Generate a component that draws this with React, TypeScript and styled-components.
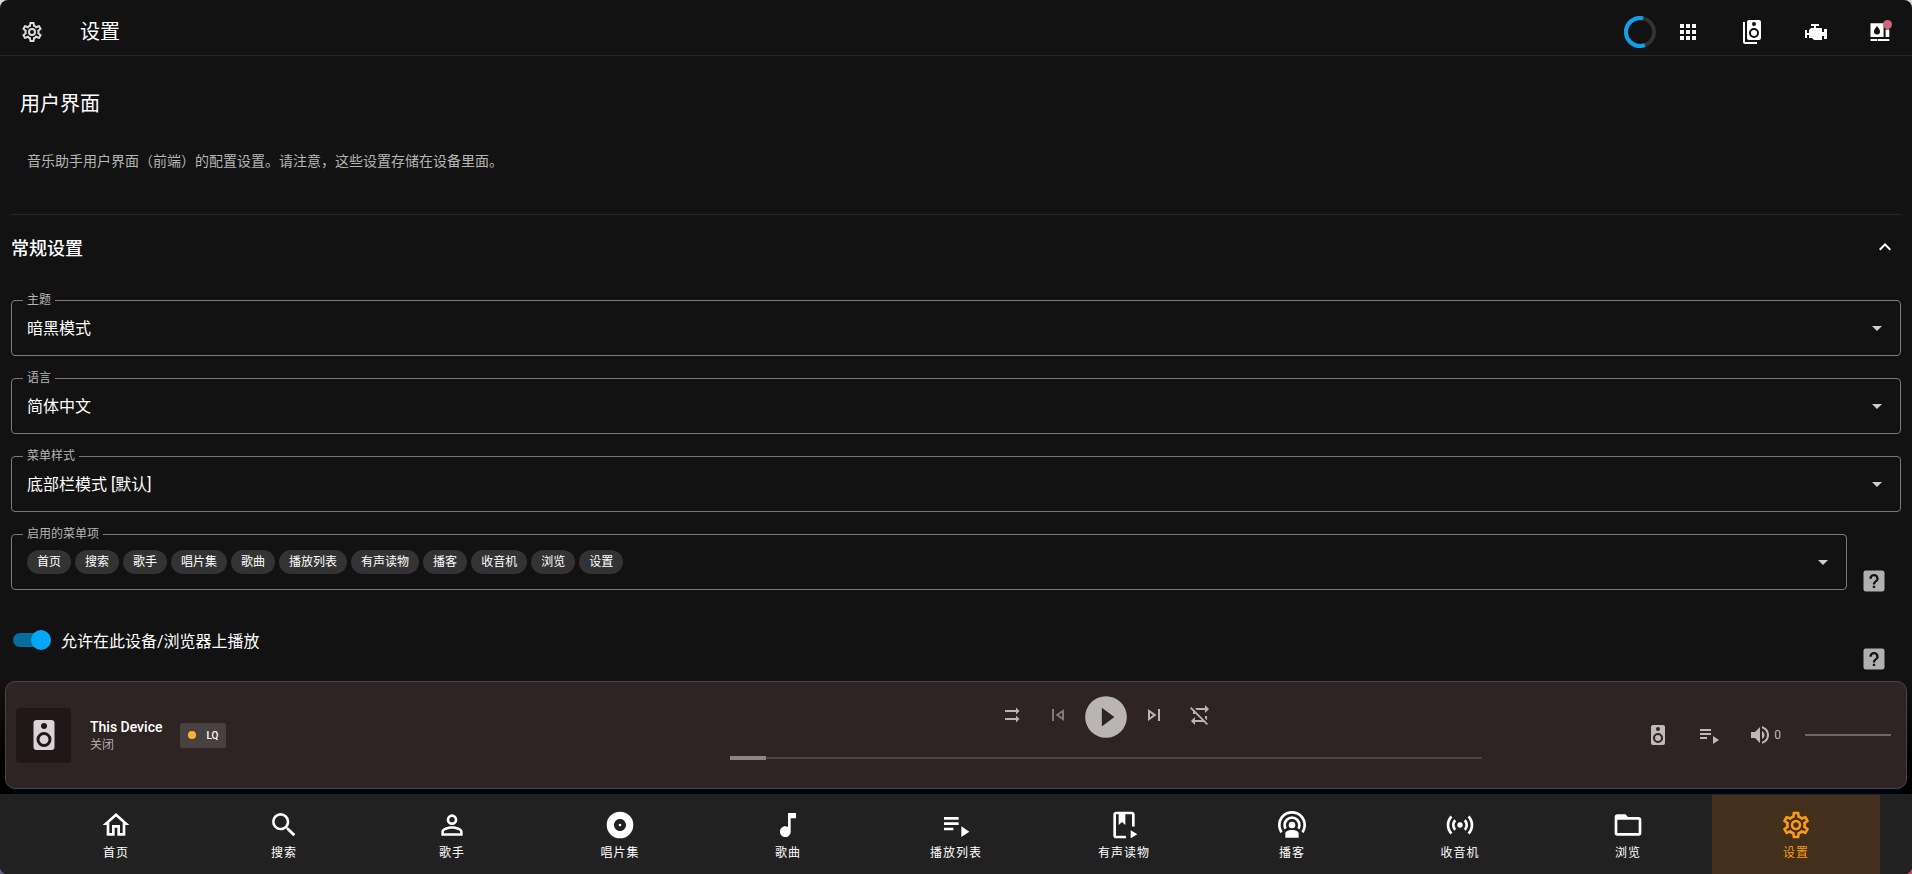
import React, { useState } from 'react';
import styled, { createGlobalStyle } from 'styled-components';

const GlobalStyle = createGlobalStyle`
  *, *::before, *::after { box-sizing: border-box; }
  html { background: #dcdce0; }
  body {
    margin: 0;
    color: #fff;
    background: linear-gradient(#dcdce0 50%, transparent 50%), linear-gradient(90deg, #5c6088, #b8506c);
    font-family: Roboto, "Noto Sans CJK SC", sans-serif;
    font-size: 16px;
  }
  button, select, input { font: inherit; color: inherit; margin: 0; }
  button { background: none; border: 0; padding: 0; cursor: pointer; }
  h1, h2, p, ul { margin: 0; padding: 0; }
`;

const paths = {
  cog: 'M12,8A4,4 0 0,1 16,12A4,4 0 0,1 12,16A4,4 0 0,1 8,12A4,4 0 0,1 12,8M12,10A2,2 0 0,0 10,12A2,2 0 0,0 12,14A2,2 0 0,0 14,12A2,2 0 0,0 12,10M10,22C9.75,22 9.54,21.82 9.5,21.58L9.13,18.93C8.5,18.68 7.96,18.34 7.44,17.94L4.95,18.95C4.73,19.03 4.46,18.95 4.34,18.73L2.34,15.27C2.21,15.05 2.27,14.78 2.46,14.63L4.57,12.97L4.5,12L4.57,11L2.46,9.37C2.27,9.22 2.21,8.95 2.34,8.73L4.34,5.27C4.46,5.05 4.73,4.96 4.95,5.05L7.44,6.05C7.96,5.66 8.5,5.32 9.13,5.07L9.5,2.42C9.54,2.18 9.75,2 10,2H14C14.25,2 14.46,2.18 14.5,2.42L14.87,5.07C15.5,5.32 16.04,5.66 16.56,6.05L19.05,5.05C19.27,4.96 19.54,5.05 19.66,5.27L21.66,8.73C21.79,8.95 21.73,9.22 21.54,9.37L19.43,11L19.5,12L19.43,13L21.54,14.63C21.73,14.78 21.79,15.05 21.66,15.27L19.66,18.73C19.54,18.95 19.27,19.04 19.05,18.95L16.56,17.95C16.04,18.34 15.5,18.68 14.87,18.93L14.5,21.58C14.46,21.82 14.25,22 14,22H10M11.25,4L10.88,6.61C9.68,6.86 8.62,7.5 7.85,8.39L5.44,7.35L4.69,8.65L6.8,10.2C6.4,11.37 6.4,12.64 6.8,13.8L4.68,15.36L5.43,16.66L7.86,15.62C8.63,16.5 9.68,17.14 10.87,17.38L11.24,20H12.76L13.13,17.39C14.32,17.14 15.37,16.5 16.14,15.62L18.57,16.66L19.32,15.36L17.2,13.81C17.6,12.64 17.6,11.37 17.2,10.2L19.31,8.65L18.56,7.35L16.15,8.39C15.38,7.5 14.32,6.86 13.12,6.62L12.75,4H11.25Z',
  apps: 'M16,20H20V16H16M16,14H20V10H16M10,8H14V4H10M16,8H20V4H16M10,14H14V10H10M4,14H8V10H4M4,20H8V16H4M10,20H14V16H10M4,8H8V4H4V8Z',
  speakers: 'M14,10A3,3 0 0,0 11,13A3,3 0 0,0 14,16A3,3 0 0,0 17,13A3,3 0 0,0 14,10M14,18A5,5 0 0,1 9,13A5,5 0 0,1 14,8A5,5 0 0,1 19,13A5,5 0 0,1 14,18M14,2A2,2 0 0,1 16,4A2,2 0 0,1 14,6A2,2 0 0,1 12,4A2,2 0 0,1 14,2M19,0H9A2,2 0 0,0 7,2V18A2,2 0 0,0 9,20H19A2,2 0 0,0 21,18V2A2,2 0 0,0 19,0M5,2H3V22A2,2 0 0,0 5,24H17V22H5V2Z',
  engine: 'M7,4V6H10V8H7L5,10V13H3V10H1V18H3V15H5V18H8L10,20H18V16H20V19H23V9H20V12H18V8H12V6H15V4H7Z',
  tank: 'M2.5,3.3H15.6V17H2.5ZM9,6C8,7.6 6,9 6,11.4A3,3 0 0,0 12,11.4C12,9 10,7.6 9,6ZM17.6,9.4H21.3V17H17.6ZM2.5,19H9.4V21H2.5ZM10,19H21.3V21H10Z',
  chevronUp: 'M7.41,15.41L12,10.83L16.59,15.41L18,14L12,8L6,14L7.41,15.41Z',
  menuDown: 'M7,10L12,15L17,10H7Z',
  help: 'M11,18H13V16H11V18M12,6A4,4 0 0,0 8,10H10A2,2 0 0,1 12,8A2,2 0 0,1 14,10C14,12 11,11.75 11,15H13C13,12.75 16,12.5 16,10A4,4 0 0,0 12,6M5,3H19A2,2 0 0,1 21,5V19A2,2 0 0,1 19,21H5A2,2 0 0,1 3,19V5A2,2 0 0,1 5,3Z',
  speaker: 'M12,12A3,3 0 0,0 9,15A3,3 0 0,0 12,18A3,3 0 0,0 15,15A3,3 0 0,0 12,12M12,20A5,5 0 0,1 7,15A5,5 0 0,1 12,10A5,5 0 0,1 17,15A5,5 0 0,1 12,20M12,4A2,2 0 0,1 14,6A2,2 0 0,1 12,8C10.89,8 10,7.1 10,6C10,4.89 10.89,4 12,4M17,2H7C5.89,2 5,2.89 5,4V20A2,2 0 0,0 7,22H17A2,2 0 0,0 19,20V4C19,2.89 18.1,2 17,2Z',
  shuffleOff: 'M16,4.5V7H5V9H16V11.5L19.5,8M16,12.5V15H5V17H16V19.5L19.5,16',
  previous: 'M6,18V6H8V18H6M18,6V18L9.5,12L18,6M16,9.86L12.97,12L16,14.14V9.86Z',
  next: 'M6,18L14.5,12L6,6M8,9.86L11.03,12L8,14.14M16,6H18V18H16',
  play: 'M10,16.5V7.5L16,12M12,2A10,10 0 0,0 2,12A10,10 0 0,0 12,22A10,10 0 0,0 22,12A10,10 0 0,0 12,2Z',
  repeatOff: 'M2,5.27L3.28,4L20,20.72L18.73,22L15.73,19H7V22L3,18L7,14V17H13.73L7,10.27V11H5V8.27L2,5.27M17,13H19V17.18L17,15.18V13M17,5V2L21,6L17,10V7H8.82L6.82,5H17Z',
  playlist: 'M3,10H14V12H3V10M3,6H14V8H3V6M3,14H10V16H3V14M16,13V21L22,17L16,13Z',
  volume: 'M14,3.23V5.29C16.89,6.15 19,8.83 19,12C19,15.17 16.89,17.84 14,18.7V20.77C18,19.86 21,16.28 21,12C21,7.72 18,4.14 14,3.23M16.5,12C16.5,10.23 15.5,8.71 14,7.97V16C15.5,15.29 16.5,13.76 16.5,12M3,9V15H7L12,20V4L7,9H3Z',
  home: 'M12,5.69L17,10.19V18H15V12H9V18H7V10.19L12,5.69M12,3L2,12H5V20H11V14H13V20H19V12H22L12,3Z',
  search: 'M9.5,3A6.5,6.5 0 0,1 16,9.5C16,11.11 15.41,12.59 14.44,13.73L14.71,14H15.5L20.5,19L19,20.5L14,15.5V14.71L13.73,14.44C12.59,15.41 11.11,16 9.5,16A6.5,6.5 0 0,1 3,9.5A6.5,6.5 0 0,1 9.5,3M9.5,5C7,5 5,7 5,9.5C5,12 7,14 9.5,14C12,14 14,12 14,9.5C14,7 12,5 9.5,5Z',
  artist: 'M12,4A4,4 0 0,1 16,8A4,4 0 0,1 12,12A4,4 0 0,1 8,8A4,4 0 0,1 12,4M12,6A2,2 0 0,0 10,8A2,2 0 0,0 12,10A2,2 0 0,0 14,8A2,2 0 0,0 12,6M12,13C14.67,13 20,14.33 20,17V20H4V17C4,14.33 9.33,13 12,13M12,14.9C9.03,14.9 5.9,16.36 5.9,17V18.1H18.1V17C18.1,16.36 14.97,14.9 12,14.9Z',
  album: 'M12,11A1,1 0 0,0 11,12A1,1 0 0,0 12,13A1,1 0 0,0 13,12A1,1 0 0,0 12,11M12,16.5C9.5,16.5 7.5,14.5 7.5,12C7.5,9.5 9.5,7.5 12,7.5C14.5,7.5 16.5,9.5 16.5,12C16.5,14.5 14.5,16.5 12,16.5M12,2A10,10 0 0,0 2,12A10,10 0 0,0 12,22A10,10 0 0,0 22,12A10,10 0 0,0 12,2Z',
  note: 'M12,3V13.55C11.41,13.21 10.73,13 10,13C7.79,13 6,14.79 6,17C6,19.21 7.79,21 10,21C12.21,21 14,19.21 14,17V7H18V3H12Z',
  book: 'M6,2C4.9,2 4,2.9 4,4V20C4,21.1 4.9,22 6,22H13.8C13.5,21.4 13.3,20.7 13.3,20H6V4H8V12L10.5,9.75L13,12V4H18V13.1C18.7,13 19.4,13 20,13.3V4C20,2.9 19.1,2 18,2H6M17,16V22L22,19L17,16Z',
  podcast: 'M17,18.25V21.5H7V18.25C7,16.87 9.24,15.75 12,15.75C14.76,15.75 17,16.87 17,18.25M12,5.5A6.5,6.5 0 0,1 18.5,12C18.5,13.25 18.15,14.42 17.54,15.41L16,14.04C16.32,13.43 16.5,12.73 16.5,12C16.5,9.5 14.5,7.5 12,7.5C9.5,7.5 7.5,9.5 7.5,12C7.5,12.73 7.68,13.43 8,14.04L6.46,15.41C5.85,14.42 5.5,13.25 5.5,12A6.5,6.5 0 0,1 12,5.5M12,1.5A10.5,10.5 0 0,1 22.5,12C22.5,14.28 21.77,16.39 20.54,18.11L19.04,16.76C19.96,15.4 20.5,13.76 20.5,12A8.5,8.5 0 0,0 12,3.5A8.5,8.5 0 0,0 3.5,12C3.5,13.76 4.04,15.4 4.96,16.76L3.46,18.11C2.23,16.39 1.5,14.28 1.5,12A10.5,10.5 0 0,1 12,1.5M12,9.5A2.5,2.5 0 0,1 14.5,12A2.5,2.5 0 0,1 12,14.5A2.5,2.5 0 0,1 9.5,12A2.5,2.5 0 0,1 12,9.5Z',
  radio: 'M4.93,4.93C3.12,6.74 2,9.24 2,12C2,14.76 3.12,17.26 4.93,19.07L6.34,17.66C4.89,16.22 4,14.22 4,12C4,9.79 4.89,7.78 6.34,6.34L4.93,4.93M19.07,4.93L17.66,6.34C19.11,7.79 20,9.79 20,12C20,14.22 19.11,16.22 17.66,17.66L19.07,19.07C20.88,17.26 22,14.76 22,12C22,9.24 20.88,6.74 19.07,4.93M7.76,7.76C6.67,8.85 6,10.35 6,12C6,13.65 6.67,15.15 7.76,16.24L9.17,14.83C8.45,14.11 8,13.11 8,12C8,10.89 8.45,9.89 9.17,9.17L7.76,7.76M16.24,7.76L14.83,9.17C15.55,9.89 16,10.89 16,12C16,13.11 15.55,14.11 14.83,14.83L16.24,16.24C17.33,15.15 18,13.65 18,12C18,10.35 17.33,8.85 16.24,7.76M12,10A2,2 0 0,0 10,12A2,2 0 0,0 12,14A2,2 0 0,0 14,12A2,2 0 0,0 12,10Z',
  folder: 'M20,18H4V8H20M20,6H12L10,4H4C2.89,4 2,4.89 2,6V18A2,2 0 0,0 4,20H20A2,2 0 0,0 22,18V8C22,6.89 21.1,6 20,6Z',
};

type IconName = keyof typeof paths;

const Svg = styled.svg<{ $size: number }>`
  display: block;
  flex: none;
  width: ${(p) => p.$size}px;
  height: ${(p) => p.$size}px;
  fill: currentColor;
  fill-rule: evenodd;
`;

function Icon({ name, size = 24, className }: { name: IconName; size?: number; className?: string }) {
  return (
    <Svg viewBox="0 0 24 24" $size={size} className={className} aria-hidden="true">
      <path d={paths[name]} />
    </Svg>
  );
}

const Shell = styled.div`
  display: flex;
  flex-direction: column;
  min-height: 100vh;
  background: #121212;
  border-radius: 8px;
  overflow: hidden;
`;

const TopBar = styled.header`
  display: flex;
  align-items: center;
  height: 56px;
  padding: 8px 8px 0;
  border-bottom: 1px solid #262626;
`;

const BarButton = styled.button`
  position: relative;
  display: grid;
  place-items: center;
  width: 48px;
  height: 48px;
`;

const MenuIcon = styled(BarButton)`
  color: #dcdcdc;
`;

const PageTitle = styled.span`
  flex: 1;
  padding-left: 24px;
  font-size: 20px;
  line-height: 32px;
`;

const Actions = styled.div`
  display: flex;
  align-items: center;
  gap: 16px;
  padding-left: 8px;
`;

const Spinner = styled.svg`
  display: block;
  width: 32px;
  height: 32px;
  fill: none;
  stroke-width: 4px;
`;

const Alert = styled.span`
  position: absolute;
  top: 12px;
  right: 12px;
  width: 9px;
  height: 9px;
  border-radius: 50%;
  background: #cf667a;
`;

const Main = styled.main`
  flex: 1;
  padding: 0 11px;
`;

const Intro = styled.section`
  padding: 32px 0 43px;
  border-bottom: 1px solid #262626;
`;

const Heading = styled.h1`
  padding-left: 9px;
  font-size: 20px;
  font-weight: 400;
  line-height: 32px;
`;

const Description = styled.p`
  margin-top: 31px;
  padding-left: 16px;
  color: #b5b5b5;
  font-size: 14px;
  line-height: 20px;
`;

const SectionTitle = styled.h2`
  margin-bottom: 22px;
  font-size: 18px;
  font-weight: 500;
`;

const SectionToggle = styled.button`
  display: flex;
  align-items: center;
  justify-content: space-between;
  width: 100%;
  height: 63px;
  padding-right: 4px;
`;

const Row = styled.div`
  display: flex;
  min-height: 78px;

  &:last-child { min-height: 0; }
`;

const Field = styled.div`
  position: relative;
  flex: 1;
  display: grid;
  height: 56px;
  border: 1px solid #7a7a7a;
  border-radius: 4px;
`;

const FieldLabel = styled.label`
  position: absolute;
  top: -9px;
  left: 11px;
  padding: 0 4px;
  background: #121212;
  color: #b5b5b5;
  font-size: 12px;
  line-height: 16px;
`;

const Select = styled.select`
  grid-area: 1 / 1;
  appearance: none;
  width: 100%;
  padding: 0 48px 0 15px;
  border: 0;
  border-radius: 4px;
  background: transparent;
  outline-offset: -2px;

  option { background: #212121; }
`;

const Arrow = styled(Icon)`
  grid-area: 1 / 1;
  align-self: center;
  justify-self: end;
  margin-right: 11px;
  color: #cfcfcf;
  pointer-events: none;
`;

const ChipBox = styled.button`
  grid-area: 1 / 1;
  display: flex;
  align-items: center;
  gap: 4px;
  padding: 0 48px 0 15px;
`;

const Chip = styled.span`
  padding: 0 10px;
  border-radius: 12px;
  background: #333;
  font-size: 12px;
  line-height: 24px;
`;

const HelpButton = styled.button`
  align-self: flex-start;
  margin: 0 13px;
  padding-top: 33px;
  color: #b0b0b0;
`;

const SwitchLabel = styled.label`
  flex: 1;
  display: flex;
  align-items: center;
  gap: 10px;
  height: 56px;
  padding-left: 2px;
  cursor: pointer;
`;

const Switch = styled.input`
  appearance: none;
  display: grid;
  align-items: center;
  width: 38px;
  height: 20px;
  cursor: pointer;

  &::before, &::after { content: ""; grid-area: 1 / 1; }
  &::before {
    width: 36px;
    height: 14px;
    border-radius: 7px;
    background: #555;
  }
  &::after {
    width: 20px;
    height: 20px;
    border-radius: 50%;
    background: #bbb;
  }
  &:checked::before { background: #086d9c; }
  &:checked::after { justify-self: end; background: #03a9f4; }
`;

const Footer = styled.footer`
  background: linear-gradient(#121212, #000 90px);
`;

const Player = styled.section`
  position: relative;
  display: grid;
  grid-template-columns: 38fr 40fr 22fr;
  align-items: center;
  height: 108px;
  margin: 0 5px 5px;
  padding: 0 10px;
  border: 1px solid #484446;
  border-radius: 10px;
  background: #2e2424;
  box-shadow: 0 11px 0 -6px #00050f;
`;

const Device = styled.div`
  display: flex;
  align-items: center;
`;

const Art = styled.div`
  display: grid;
  place-items: center;
  width: 55px;
  height: 55px;
  margin-right: 19px;
  border-radius: 4px;
  background: #201718;
  color: #d9d5d6;
`;

const DeviceName = styled.div`
  font-size: 14px;
  font-weight: 500;
  line-height: 20px;
`;

const DeviceState = styled.div`
  color: #b0acac;
  font-size: 12px;
  line-height: 16px;
`;

const Quality = styled.button`
  display: flex;
  align-items: center;
  gap: 10px;
  height: 25px;
  margin-left: 18px;
  padding: 0 8px;
  border-radius: 2px;
  background: #494040;
  font-size: 10px;
  font-weight: 500;

  &::before {
    content: "";
    width: 8px;
    height: 8px;
    border-radius: 50%;
    background: #ffb02e;
  }
`;

const Transport = styled.div`
  align-self: start;
  padding-top: 10px;
`;

const Buttons = styled.div`
  display: flex;
  align-items: flex-start;
  justify-content: center;
  margin-bottom: 12px;
`;

const TransportButton = styled.button<{ $dim?: boolean }>`
  display: grid;
  place-items: center;
  width: 46px;
  height: 46px;
  color: ${(p) => (p.$dim ? '#7f7978' : '#b9b5b4')};
`;

const PlayButton = styled.button`
  color: #b9b5b4;
`;

const Range = styled.input<{ $line: string; $fill?: string }>`
  appearance: none;
  display: block;
  width: 100%;
  height: 8px;
  background:
    linear-gradient(#8e8684, #8e8684) left center / ${(p) => p.$fill ?? '0'} 4px no-repeat,
    linear-gradient(${(p) => p.$line}, ${(p) => p.$line}) center / 100% 2px no-repeat;
  cursor: pointer;

  &::-webkit-slider-thumb {
    appearance: none;
    width: 8px;
    height: 8px;
    background: transparent;
  }
`;

const Output = styled.div`
  display: flex;
  align-items: center;
  justify-content: flex-end;
  gap: 27px;
  padding-right: 5px;
  color: #bfbaba;
`;

const Volume = styled.div`
  display: flex;
  align-items: center;
  gap: 2px;
  font-size: 12px;
`;

const VolumeSlider = styled.div`
  width: 108px;
  padding-left: 22px;
`;

const Nav = styled.nav`
  position: relative;
  display: flex;
  padding: 1px 32px 0;
  background: #212121;
`;

const NavItem = styled.button<{ $active: boolean }>`
  flex: 1;
  display: flex;
  flex-direction: column;
  align-items: center;
  gap: 4px;
  padding: 14px 0 13px;
  background: ${(p) => (p.$active ? '#42301c' : 'transparent')};
  color: ${(p) => (p.$active ? '#fb9a12' : '#fff')};
  font-size: 12px;
  line-height: 16px;
  letter-spacing: 1px;
`;

const fields = [
  { id: 'theme', label: '主题', value: '暗黑模式' },
  { id: 'language', label: '语言', value: '简体中文' },
  { id: 'menu-style', label: '菜单样式', value: '底部栏模式 [默认]' },
];

const menu: { label: string; icon: IconName }[] = [
  { label: '首页', icon: 'home' },
  { label: '搜索', icon: 'search' },
  { label: '歌手', icon: 'artist' },
  { label: '唱片集', icon: 'album' },
  { label: '歌曲', icon: 'note' },
  { label: '播放列表', icon: 'playlist' },
  { label: '有声读物', icon: 'book' },
  { label: '播客', icon: 'podcast' },
  { label: '收音机', icon: 'radio' },
  { label: '浏览', icon: 'folder' },
  { label: '设置', icon: 'cog' },
];

export default function App() {
  const [open, setOpen] = useState(true);
  const [active, setActive] = useState('设置');

  return (
    <>
      <GlobalStyle />
      <Shell>
        <TopBar>
          <MenuIcon aria-label="设置"><Icon name="cog" /></MenuIcon>
          <PageTitle>设置</PageTitle>
          <Actions>
            <Spinner viewBox="0 0 32 32" role="img" aria-label="加载中">
              <circle cx="16" cy="16" r="14" stroke="#333" />
              <path d="M20.8 29.2A14 14 0 1 1 19.1 2.4" stroke="#0ba3ee" />
            </Spinner>
          </Actions>
          <Actions>
            <BarButton aria-label="应用"><Icon name="apps" /></BarButton>
            <BarButton aria-label="播放器"><Icon name="speakers" /></BarButton>
            <BarButton aria-label="核心"><Icon name="engine" /></BarButton>
            <BarButton aria-label="提供者"><Icon name="tank" /><Alert /></BarButton>
          </Actions>
        </TopBar>

        <Main>
          <Intro>
            <Heading>用户界面</Heading>
            <Description>音乐助手用户界面（前端）的配置设置。请注意，这些设置存储在设备里面。</Description>
          </Intro>
          <SectionTitle>
            <SectionToggle aria-expanded={open} onClick={() => setOpen(!open)}>
              常规设置
              <Icon name="chevronUp" />
            </SectionToggle>
          </SectionTitle>
          {open && (
            <div>
              {fields.map((f) => (
                <Row key={f.id}>
                  <Field>
                    <Select id={f.id}><option>{f.value}</option></Select>
                    <Arrow name="menuDown" />
                    <FieldLabel htmlFor={f.id}>{f.label}</FieldLabel>
                  </Field>
                </Row>
              ))}
              <Row>
                <Field>
                  <ChipBox id="menu-items" aria-haspopup="listbox">
                    {menu.map((m) => <Chip key={m.label}>{m.label}</Chip>)}
                  </ChipBox>
                  <Arrow name="menuDown" />
                  <FieldLabel htmlFor="menu-items">启用的菜单项</FieldLabel>
                </Field>
                <HelpButton aria-label="帮助"><Icon name="help" size={28} /></HelpButton>
              </Row>
              <Row>
                <SwitchLabel>
                  <Switch type="checkbox" defaultChecked />
                  允许在此设备/浏览器上播放
                </SwitchLabel>
                <HelpButton aria-label="帮助"><Icon name="help" size={28} /></HelpButton>
              </Row>
            </div>
          )}
        </Main>

        <Footer>
          <Player>
            <Device>
              <Art><Icon name="speaker" size={36} /></Art>
              <div>
                <DeviceName>This Device</DeviceName>
                <DeviceState>关闭</DeviceState>
              </div>
              <Quality>LQ</Quality>
            </Device>
            <Transport>
              <Buttons>
                <TransportButton aria-label="随机播放"><Icon name="shuffleOff" /></TransportButton>
                <TransportButton aria-label="上一首" $dim><Icon name="previous" /></TransportButton>
                <PlayButton aria-label="播放"><Icon name="play" size={50} /></PlayButton>
                <TransportButton aria-label="下一首"><Icon name="next" /></TransportButton>
                <TransportButton aria-label="循环播放"><Icon name="repeatOff" /></TransportButton>
              </Buttons>
              <Range type="range" aria-label="播放进度" defaultValue={0} $line="#4e4546" $fill="36px" />
            </Transport>
            <Output>
              <button aria-label="播放器"><Icon name="speaker" /></button>
              <button aria-label="播放队列"><Icon name="playlist" /></button>
              <Volume>
                <button aria-label="静音"><Icon name="volume" /></button>
                0
                <VolumeSlider>
                  <Range type="range" aria-label="音量" defaultValue={0} $line="#6f6767" />
                </VolumeSlider>
              </Volume>
            </Output>
          </Player>
          <Nav>
            {menu.map((m) => (
              <NavItem key={m.label} $active={m.label === active} onClick={() => setActive(m.label)}>
                <Icon name={m.icon} size={32} />
                {m.label}
              </NavItem>
            ))}
          </Nav>
        </Footer>
      </Shell>
    </>
  );
}
